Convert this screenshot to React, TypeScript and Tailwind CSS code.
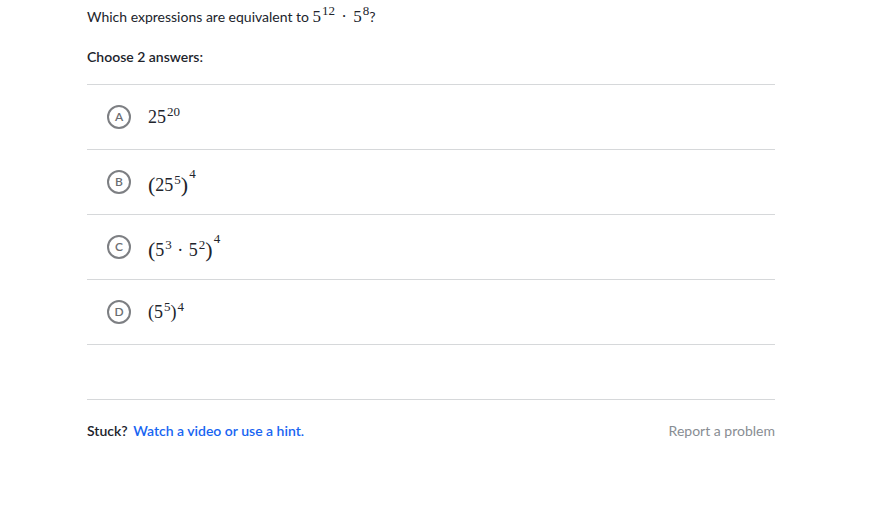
import React from "react";

const serif = { fontFamily: '"Liberation Serif", "DejaVu Serif", serif' };

function Sup({ children, high = false }: { children: React.ReactNode; high?: boolean }) {
  return (
    <sup className={`ml-[1px] text-[13px] leading-none ${high ? "top-0 align-[13px]" : "top-0 align-[7px]"}`}>
      {children}
    </sup>
  );
}

function Big({ children }: { children: React.ReactNode }) {
  return <span className="align-[-1px] text-[22px] leading-none">{children}</span>;
}

function Choice({ letter, children }: { letter: string; children: React.ReactNode }) {
  return (
    <div className="flex h-[65px] items-center gap-[17px] border-b border-[#d6d8da] pl-5">
      <div className="flex h-6 w-6 items-center justify-center rounded-full border-2 border-[#7d7f83] text-[12px] font-semibold text-[#6b6d71]">
        {letter}
      </div>
      <div className="text-[18px] leading-[24px] text-[#21242c]" style={serif}>
        {children}
      </div>
    </div>
  );
}

export default function App() {
  return (
    <div className="min-h-[508px] w-[895px] bg-white text-[#21242c]" style={{ fontFamily: 'Lato, "Noto Sans", sans-serif' }}>
      <div className="ml-[87px] flex w-[688px] flex-col">
        <p className="flex h-[28px] items-end text-[14px] leading-[22px]">
          <span>
            Which expressions are equivalent to{" "}
            <span className="text-[17px] leading-none" style={serif}>
              5<Sup>12</Sup> <span className="mx-[2px]">·</span> 5<Sup>8</Sup>
            </span>
            ?
          </span>
        </p>
        <p className="mt-[18px] text-[14px] font-semibold leading-[22px]">Choose 2 answers:</p>
        <div className="mt-[16px] flex flex-col border-t border-[#d6d8da]">
          <Choice letter="A">
            25<Sup>20</Sup>
          </Choice>
          <Choice letter="B">
            <Big>(</Big>25<Sup>5</Sup>
            <Big>)</Big>
            <Sup high>4</Sup>
          </Choice>
          <Choice letter="C">
            <Big>(</Big>5<Sup>3</Sup> <span className="mx-[1px]">·</span> 5<Sup>2</Sup>
            <Big>)</Big>
            <Sup high>4</Sup>
          </Choice>
          <Choice letter="D">
            (5<Sup>5</Sup>)<Sup>4</Sup>
          </Choice>
        </div>
        <div className="mt-[54px] border-t border-[#d6d8da]" />
        <div className="mt-[20px] flex items-center justify-between text-[14px] leading-[22px]">
          <p className="font-semibold">
            Stuck?{" "}
            <span className="ml-[2px] text-[#1865f2]">Watch a video or use a hint.</span>
          </p>
          <p className="text-[#888d93]">Report a problem</p>
        </div>
      </div>
    </div>
  );
}
